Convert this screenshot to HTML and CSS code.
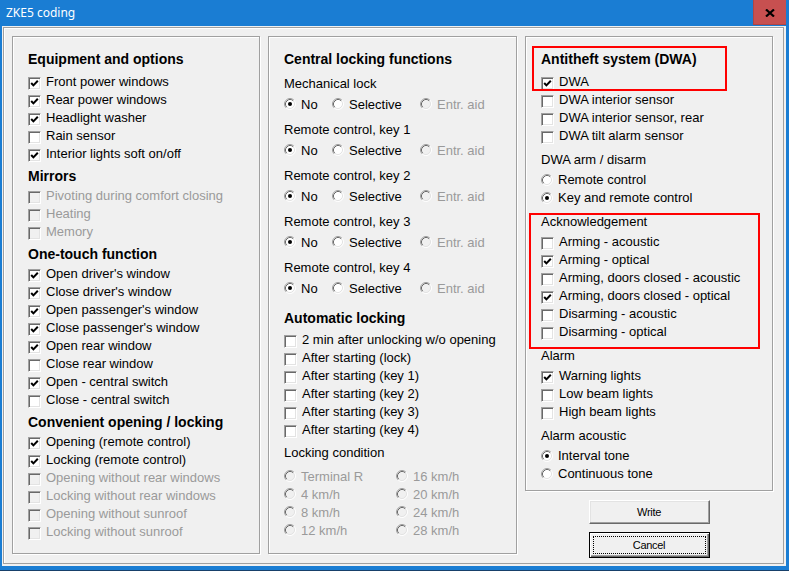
FILE: index.html
```html
<!DOCTYPE html>
<html lang="en">
<head>
  <meta charset="UTF-8" />
  <title>ZKE5 coding</title>
  <link rel="stylesheet" href="styles.css">
</head>
<body>
  <!-- shared glyphs -->
  <svg class="defs" aria-hidden="true">
    <symbol id="tick" viewBox="0 0 11 11">
      <path d="M2.2 5 L4.4 7.4 L8.8 2.8" fill="none" stroke="#000" stroke-width="2" />
    </symbol>
    <symbol id="radio" viewBox="0 0 12 12">
      <circle cx="6" cy="6" r="5" fill="currentColor" />
      <path d="M2.11 9.89 A5.5 5.5 0 0 1 9.89 2.11" stroke="#a0a0a0" fill="none" />
      <path d="M9.89 2.11 A5.5 5.5 0 0 1 2.11 9.89" stroke="#fff" fill="none" />
      <path d="M2.82 9.18 A4.5 4.5 0 0 1 9.18 2.82" stroke="#696969" fill="none" />
      <path d="M9.18 2.82 A4.5 4.5 0 0 1 2.82 9.18" stroke="#e3e3e3" fill="none" />
    </symbol>
  </svg>

  <div class="window">
    <div class="titlebar">
      <span class="title">ZKE5 coding</span>
      <span class="close">
        <svg width="10" height="8" viewBox="0 0 10 8"><path d="M1 0.5 L9 7.5 M9 0.5 L1 7.5" stroke="#000" stroke-width="2.2" /></svg>
      </span>
    </div>

    <div class="client">
      <div class="frame">

        <!-- Equipment -->
        <div class="panel">
          <div class="head top">Equipment and options</div>
          <label class="row"><span class="cb"><svg viewBox="0 0 11 11"><use href="#tick" /></svg></span>Front power windows</label>
          <label class="row"><span class="cb"><svg viewBox="0 0 11 11"><use href="#tick" /></svg></span>Rear power windows</label>
          <label class="row"><span class="cb"><svg viewBox="0 0 11 11"><use href="#tick" /></svg></span>Headlight washer</label>
          <label class="row"><span class="cb"></span>Rain sensor</label>
          <label class="row"><span class="cb"><svg viewBox="0 0 11 11"><use href="#tick" /></svg></span>Interior lights soft on/off</label>

          <div class="head">Mirrors</div>
          <label class="row off"><span class="cb"></span>Pivoting during comfort closing</label>
          <label class="row off"><span class="cb"></span>Heating</label>
          <label class="row off"><span class="cb"></span>Memory</label>

          <div class="head">One-touch function</div>
          <label class="row"><span class="cb"><svg viewBox="0 0 11 11"><use href="#tick" /></svg></span>Open driver's window</label>
          <label class="row"><span class="cb"><svg viewBox="0 0 11 11"><use href="#tick" /></svg></span>Close driver's window</label>
          <label class="row"><span class="cb"><svg viewBox="0 0 11 11"><use href="#tick" /></svg></span>Open passenger's window</label>
          <label class="row"><span class="cb"><svg viewBox="0 0 11 11"><use href="#tick" /></svg></span>Close passenger's window</label>
          <label class="row"><span class="cb"><svg viewBox="0 0 11 11"><use href="#tick" /></svg></span>Open rear window</label>
          <label class="row"><span class="cb"></span>Close rear window</label>
          <label class="row"><span class="cb"><svg viewBox="0 0 11 11"><use href="#tick" /></svg></span>Open - central switch</label>
          <label class="row"><span class="cb"></span>Close - central switch</label>

          <div class="head">Convenient opening / locking</div>
          <label class="row"><span class="cb"><svg viewBox="0 0 11 11"><use href="#tick" /></svg></span>Opening (remote control)</label>
          <label class="row"><span class="cb"><svg viewBox="0 0 11 11"><use href="#tick" /></svg></span>Locking (remote control)</label>
          <label class="row off"><span class="cb"></span>Opening without rear windows</label>
          <label class="row off"><span class="cb"></span>Locking without rear windows</label>
          <label class="row off"><span class="cb"></span>Opening without sunroof</label>
          <label class="row off"><span class="cb"></span>Locking without sunroof</label>
        </div>

        <!-- Central locking -->
        <div class="panel">
          <div class="head top">Central locking functions</div>

          <div class="sub first">Mechanical lock</div>
          <div class="choice">
            <label class="opt"><svg class="rb" viewBox="0 0 12 12"><use href="#radio" /><circle class="dot" cx="6" cy="6" r="2" /></svg>No</label>
            <label class="opt"><svg class="rb" viewBox="0 0 12 12"><use href="#radio" /></svg>Selective</label>
            <label class="opt off"><svg class="rb" viewBox="0 0 12 12"><use href="#radio" /></svg>Entr. aid</label>
          </div>

          <div class="sub">Remote control, key 1</div>
          <div class="choice">
            <label class="opt"><svg class="rb" viewBox="0 0 12 12"><use href="#radio" /><circle class="dot" cx="6" cy="6" r="2" /></svg>No</label>
            <label class="opt"><svg class="rb" viewBox="0 0 12 12"><use href="#radio" /></svg>Selective</label>
            <label class="opt off"><svg class="rb" viewBox="0 0 12 12"><use href="#radio" /></svg>Entr. aid</label>
          </div>

          <div class="sub">Remote control, key 2</div>
          <div class="choice">
            <label class="opt"><svg class="rb" viewBox="0 0 12 12"><use href="#radio" /><circle class="dot" cx="6" cy="6" r="2" /></svg>No</label>
            <label class="opt"><svg class="rb" viewBox="0 0 12 12"><use href="#radio" /></svg>Selective</label>
            <label class="opt off"><svg class="rb" viewBox="0 0 12 12"><use href="#radio" /></svg>Entr. aid</label>
          </div>

          <div class="sub">Remote control, key 3</div>
          <div class="choice">
            <label class="opt"><svg class="rb" viewBox="0 0 12 12"><use href="#radio" /><circle class="dot" cx="6" cy="6" r="2" /></svg>No</label>
            <label class="opt"><svg class="rb" viewBox="0 0 12 12"><use href="#radio" /></svg>Selective</label>
            <label class="opt off"><svg class="rb" viewBox="0 0 12 12"><use href="#radio" /></svg>Entr. aid</label>
          </div>

          <div class="sub">Remote control, key 4</div>
          <div class="choice">
            <label class="opt"><svg class="rb" viewBox="0 0 12 12"><use href="#radio" /><circle class="dot" cx="6" cy="6" r="2" /></svg>No</label>
            <label class="opt"><svg class="rb" viewBox="0 0 12 12"><use href="#radio" /></svg>Selective</label>
            <label class="opt off"><svg class="rb" viewBox="0 0 12 12"><use href="#radio" /></svg>Entr. aid</label>
          </div>

          <div class="head auto">Automatic locking</div>
          <label class="row"><span class="cb"></span>2 min after unlocking w/o opening</label>
          <label class="row"><span class="cb"></span>After starting (lock)</label>
          <label class="row"><span class="cb"></span>After starting (key 1)</label>
          <label class="row"><span class="cb"></span>After starting (key 2)</label>
          <label class="row"><span class="cb"></span>After starting (key 3)</label>
          <label class="row"><span class="cb"></span>After starting (key 4)</label>

          <div class="sub cond">Locking condition</div>
          <div class="speeds">
            <label class="opt off"><svg class="rb" viewBox="0 0 12 12"><use href="#radio" /></svg>Terminal R</label>
            <label class="opt off"><svg class="rb" viewBox="0 0 12 12"><use href="#radio" /></svg>16 km/h</label>
            <label class="opt off"><svg class="rb" viewBox="0 0 12 12"><use href="#radio" /></svg>4 km/h</label>
            <label class="opt off"><svg class="rb" viewBox="0 0 12 12"><use href="#radio" /></svg>20 km/h</label>
            <label class="opt off"><svg class="rb" viewBox="0 0 12 12"><use href="#radio" /></svg>8 km/h</label>
            <label class="opt off"><svg class="rb" viewBox="0 0 12 12"><use href="#radio" /></svg>24 km/h</label>
            <label class="opt off"><svg class="rb" viewBox="0 0 12 12"><use href="#radio" /></svg>12 km/h</label>
            <label class="opt off"><svg class="rb" viewBox="0 0 12 12"><use href="#radio" /></svg>28 km/h</label>
          </div>
        </div>

        <!-- Antitheft + buttons -->
        <div class="side">
          <div class="panel dwa">
            <div class="group mark-dwa">
              <div class="head top">Antitheft system (DWA)</div>
              <label class="row"><span class="cb"><svg viewBox="0 0 11 11"><use href="#tick" /></svg></span>DWA</label>
            </div>
            <label class="row"><span class="cb"></span>DWA interior sensor</label>
            <label class="row"><span class="cb"></span>DWA interior sensor, rear</label>
            <label class="row"><span class="cb"></span>DWA tilt alarm sensor</label>

            <div class="sub">DWA arm / disarm</div>
            <label class="row"><svg class="rb" viewBox="0 0 12 12"><use href="#radio" /></svg>Remote control</label>
            <label class="row"><svg class="rb" viewBox="0 0 12 12"><use href="#radio" /><circle class="dot" cx="6" cy="6" r="2" /></svg>Key and remote control</label>

            <div class="group mark-ack">
              <div class="sub">Acknowledgement</div>
              <label class="row"><span class="cb"></span>Arming - acoustic</label>
              <label class="row"><span class="cb"><svg viewBox="0 0 11 11"><use href="#tick" /></svg></span>Arming - optical</label>
              <label class="row"><span class="cb"></span>Arming, doors closed - acoustic</label>
              <label class="row"><span class="cb"><svg viewBox="0 0 11 11"><use href="#tick" /></svg></span>Arming, doors closed - optical</label>
              <label class="row"><span class="cb"></span>Disarming - acoustic</label>
              <label class="row"><span class="cb"></span>Disarming - optical</label>
            </div>

            <div class="sub">Alarm</div>
            <label class="row"><span class="cb"><svg viewBox="0 0 11 11"><use href="#tick" /></svg></span>Warning lights</label>
            <label class="row"><span class="cb"></span>Low beam lights</label>
            <label class="row"><span class="cb"></span>High beam lights</label>

            <div class="sub">Alarm acoustic</div>
            <label class="row"><svg class="rb" viewBox="0 0 12 12"><use href="#radio" /><circle class="dot" cx="6" cy="6" r="2" /></svg>Interval tone</label>
            <label class="row"><svg class="rb" viewBox="0 0 12 12"><use href="#radio" /></svg>Continuous tone</label>
          </div>

          <button class="btn write">Write</button>
          <button class="btn default"><span>Cancel</span></button>
        </div>

      </div>
    </div>
  </div>
</body>
</html>
```

FILE: styles.css
```css
body {
  margin: 0;
  font-family: 'Liberation Sans', Arial, sans-serif;
  font-size: 13px;
  color: #000;
  background: #f0f0f0;
}

.defs {
  position: absolute;
  width: 0;
  height: 0;
}

/* window chrome */
.window {
  width: 789px;
  height: 571px;
  box-sizing: border-box;
  display: flex;
  flex-direction: column;
  background: #1a7dd3;
  padding: 0 3px 5px 2px;
  box-shadow: inset 0 -1px #17406a;
}

.titlebar {
  height: 26px;
  display: flex;
  align-items: flex-start;
  flex-shrink: 0;
}

.title {
  font-family: 'Noto Sans', 'Open Sans', sans-serif;
  font-size: 12px;
  line-height: 26px;
  color: #fff;
  padding-left: 4px;
}

.close {
  margin-left: auto;
  width: 33px;
  height: 25px;
  background: #c75050;
  box-shadow: inset 1px 0 #b04545, inset 0 -1px #b04545;
  display: flex;
  align-items: center;
  justify-content: center;
}

.client {
  flex: 1;
  background: #f0f0f0;
  padding: 1px 2px 2px 1px;
  display: flex;
}

.frame {
  flex: 1;
  border: 1px solid #a0a0a0;
  box-shadow: inset 1px 1px #fff;
  display: grid;
  grid-template-columns: 248px 249px 248px;
  column-gap: 8px;
  align-items: start;
  padding: 8px 0 0 8px;
}

/* group boxes */
.panel {
  box-sizing: border-box;
  height: 518px;
  border: 1px solid #a0a0a0;
  box-shadow: inset 1px 1px #fff, 1px 1px #fff;
  padding: 13px 0 0 15px;
  display: flex;
  flex-direction: column;
}

.panel.dwa {
  align-self: stretch;
  height: auto;
  padding-bottom: 7px;
}

.head {
  font-weight: bold;
  font-size: 14px;
  line-height: 18px;
  height: 18px;
  margin: 4px 0 2px;
  white-space: nowrap;
}

.head.top {
  margin: 0 0 5px;
}

.head.auto {
  margin: 12px 0 4px;
}

.sub {
  line-height: 18px;
  height: 18px;
  margin: 8px 0 2px;
}

.sub.first {
  margin-top: 2px;
}

.sub.cond {
  margin: 5px 0 5px;
}

.dwa .sub {
  margin-top: 6px;
}

.row {
  display: flex;
  align-items: center;
  gap: 5px;
  height: 18px;
  line-height: 18px;
  white-space: nowrap;
}

.off {
  color: #9a9a9a;
}

/* checkbox */
.cb {
  width: 13px;
  height: 13px;
  box-sizing: border-box;
  flex-shrink: 0;
  margin-top: 2px;
  border: 1px solid;
  border-color: #a0a0a0 #fff #fff #a0a0a0;
  box-shadow: inset 1px 1px #696969, inset -1px -1px #e3e3e3;
  background: #fff;
  display: flex;
}

.cb svg {
  width: 11px;
  height: 11px;
}

.off .cb {
  background: #f0f0f0;
}

/* radio */
.rb {
  width: 12px;
  height: 12px;
  flex-shrink: 0;
  color: #fff;
}

.off .rb {
  color: #f0f0f0;
}

.rb .dot {
  fill: #000;
}

.choice {
  display: grid;
  grid-template-columns: 48px 88px auto;
  height: 18px;
}

.speeds {
  display: grid;
  grid-template-columns: 112px auto;
  grid-auto-rows: 18px;
}

.opt {
  display: flex;
  align-items: center;
  gap: 5px;
  height: 18px;
  white-space: nowrap;
}

/* red highlight frames */
.group {
  position: relative;
  display: flex;
  flex-direction: column;
}

.group::after {
  content: '';
  position: absolute;
  box-sizing: border-box;
  border: 2px solid #f00;
}

.mark-dwa::after {
  top: -4px;
  bottom: 0;
  left: -9px;
  width: 195px;
}

.mark-ack {
  margin-top: 6px;
}

.mark-ack .sub {
  margin-top: 0;
}

.mark-ack::after {
  top: 0;
  bottom: -8px;
  left: -12px;
  width: 231px;
}

/* buttons */
.side {
  display: flex;
  flex-direction: column;
  align-items: center;
}

.btn {
  width: 121px;
  height: 24px;
  box-sizing: border-box;
  margin: 0;
  padding: 0;
  font-family: 'Liberation Sans', Arial, sans-serif;
  font-size: 11px;
  letter-spacing: -0.3px;
  color: #000;
  background: #f0f0f0;
  border: 1px solid;
  border-color: #fff #696969 #696969 #fff;
  box-shadow: inset -1px -1px #a0a0a0, inset 1px 1px #e3e3e3;
}

.btn.write {
  margin-top: 9px;
}

.btn.default {
  height: 26px;
  margin-top: 8px;
  border: 1px solid #000;
  box-shadow: inset 1px 1px #fff, inset -1px -1px #696969, inset -2px -2px #a0a0a0;
  padding: 3px;
  display: flex;
}

.btn.default span {
  flex: 1;
  border: 1px dotted #000;
  display: flex;
  align-items: center;
  justify-content: center;
}
```
